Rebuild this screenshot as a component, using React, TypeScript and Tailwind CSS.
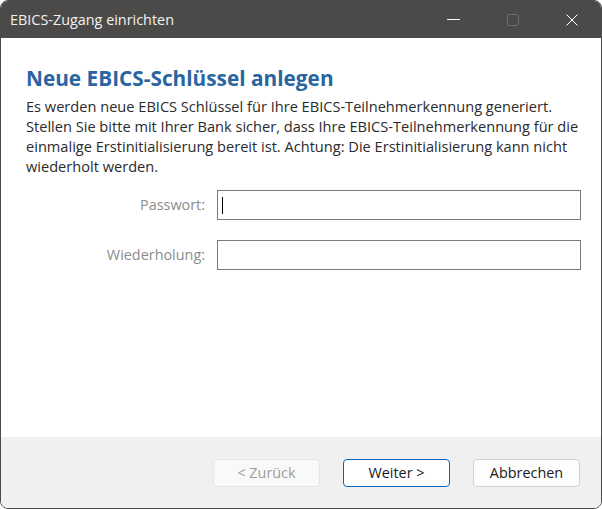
const font = { fontFamily: '"Segoe UI", "Open Sans", "Noto Sans", sans-serif' }

export default function App() {
  return (
    <div className="w-[602px] h-[509px] bg-white" style={font}>
      <div className="flex h-full flex-col overflow-hidden rounded-lg border border-[#4b4a48] bg-white">
        <div className="flex h-[37px] shrink-0 items-center bg-[#4b4a48] pl-[9px]">
          <span className="text-[14.4px] text-[#f2f2f2]">EBICS-Zugang einrichten</span>
          <div className="ml-auto flex h-full items-center">
            <div className="flex h-full w-[59px] items-center justify-center">
              <svg width="13" height="13" viewBox="0 0 13 13">
                <path d="M0 6.5h13" stroke="#ffffff" strokeWidth="1" />
              </svg>
            </div>
            <div className="flex h-full w-[59px] items-center justify-center">
              <svg width="12" height="12" viewBox="0 0 12 12">
                <rect x="0.5" y="0.5" width="11" height="11" rx="1.5" fill="none" stroke="#6e6d6b" strokeWidth="1" />
              </svg>
            </div>
            <div className="flex h-full w-[59px] items-center justify-center">
              <svg width="12" height="12" viewBox="0 0 12 12">
                <path d="M0.5 0.5L11.5 11.5M11.5 0.5L0.5 11.5" stroke="#ffffff" strokeWidth="1" />
              </svg>
            </div>
          </div>
        </div>

        <div className="flex-1 pl-[25px] pr-[10px] pt-[26px]">
          <h1 className="text-[20.8px] font-bold leading-[28px] text-[#2b65a1]">Neue EBICS-Schlüssel anlegen</h1>
          <p className="mt-[4px] whitespace-nowrap text-[14.6px] leading-[20px] text-[#2b2b2b]">
            Es werden neue EBICS Schlüssel für Ihre EBICS-Teilnehmerkennung generiert.
            <br />
            Stellen Sie bitte mit Ihrer Bank sicher, dass Ihre EBICS-Teilnehmerkennung für die
            <br />
            einmalige Erstinitialisierung bereit ist. Achtung: Die Erstinitialisierung kann nicht
            <br />
            wiederholt werden.
          </p>

          <div className="mt-[14px] flex flex-col gap-[20px]">
            <div className="flex items-center">
              <label className="w-[191px] shrink-0 pr-[12px] text-right text-[14.4px] text-[#8c8c8c]">Passwort:</label>
              <div className="flex h-[30px] w-[364px] shrink-0 items-center border border-[#7a7a7a] bg-white pl-[4px]">
                <div className="h-[17px] w-px bg-black" />
              </div>
            </div>
            <div className="flex items-center">
              <label className="w-[191px] shrink-0 pr-[12px] text-right text-[14.4px] text-[#8c8c8c]">Wiederholung:</label>
              <div className="h-[30px] w-[364px] shrink-0 border border-[#7a7a7a] bg-white" />
            </div>
          </div>
        </div>

        <div className="flex h-[71px] shrink-0 items-center justify-end gap-[23px] bg-[#f0f0f0] pr-[21px]">
          <button className="h-[28px] w-[107px] rounded-[4px] border border-[#e5e5e5] bg-[#f9f9f9] text-[14.4px] text-[#9d9d9d]">
            &lt; Zurück
          </button>
          <button className="h-[28px] w-[107px] rounded-[4px] border border-[#0067c0] bg-white text-[14.4px] text-[#1a1a1a]">
            Weiter &gt;
          </button>
          <button className="h-[28px] w-[107px] rounded-[4px] border border-[#d0d0d0] bg-[#fdfdfd] text-[14.4px] text-[#1a1a1a]">
            Abbrechen
          </button>
        </div>
      </div>
    </div>
  )
}
